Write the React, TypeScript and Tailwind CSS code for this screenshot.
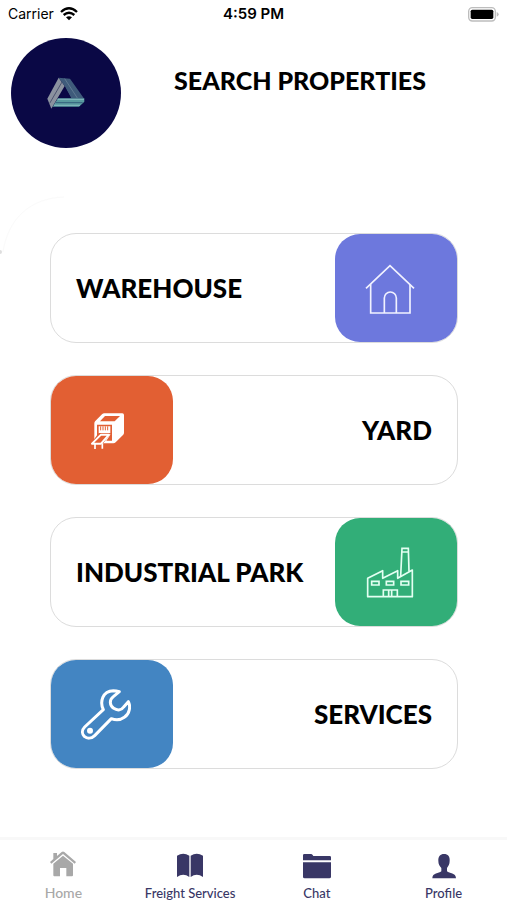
import type { ReactNode } from "react"
import { clsx } from "clsx"

interface Category {
  title: string
  color: string
  iconSide: "left" | "right"
  icon: ReactNode
}

interface Tab {
  label: string
  active?: boolean
  icon: ReactNode
}

const WarehouseIcon = () => (
  <svg viewBox="0 0 150 156" className="w-[50px] h-[52px]" fill="none" stroke="#f1f2ff" strokeWidth="5">
    <path d="M3 79 L75 11 L147 79" />
    <path d="M17 67 V153 H135 V67" />
    <path d="M58 153 V108 A18 18 0 0 1 94 108 V153" />
  </svg>
)

const YardIcon = () => (
  <svg viewBox="0 0 150 156" className="w-[50px] h-[52px]">
    <path
      d="M40 58 Q40 54 43 51 L63 31 Q66 28 70 28 H124 Q129 28 129 33 V86 Q129 90 126 93 L104 115 Q101 118 97 118 H66 L85 93 H62 L40 111 Z"
      fill="#fff"
    />
    <path d="M57 52 L72 36 H117 L101 52 Z" fill="#e25f33" />
    <path d="M48 62 H93 V110 H76 L88 92 V67 H53 V97 L48 101 Z" fill="#e25f33" />
    <path d="M59 67 V79 M66 67 V79 M73 67 V79 M80 67 V79" stroke="#e25f33" strokeWidth="3" />
    <path d="M53 87 H91 L61 124 H26 Z" fill="#e25f33" />
    <path d="M60 92 H84 L60 119 H33 Z" fill="#e25f33" stroke="#fff" strokeWidth="6" strokeLinejoin="round" />
    <path d="M42 120 V135 M64 118 V134" stroke="#fff" strokeWidth="5" />
  </svg>
)

const IndustrialIcon = () => (
  <svg viewBox="0 0 150 156" className="w-[50px] h-[52px]" fill="none" stroke="#e4fff2" strokeWidth="5">
    <path d="M8 97 L53 74 V97 L98 74 V97 L142 72 V152 H8 Z" strokeLinejoin="round" />
    <path d="M107 91 L111 7 H130 L132 76 M111 18 H130" />
    <path d="M20 106 H42 V117 H20 Z M64 106 H86 V117 H64 Z M108 106 H131 V117 H108 Z" />
    <path d="M55 152 V132 H97 V152 M71 134 V150 M80 134 V150" />
  </svg>
)

const ServicesIcon = () => (
  <svg viewBox="0 0 150 156" className="w-[50px] h-[52px]" fill="none" stroke="#fff" strokeWidth="9" strokeLinejoin="round">
    <path d="M67 65 C56 42 64 9 97 8 C103 8 109 9 115 11 L97 26 C84 36 86 53 98 61 C110 69 122 66 128 57 L142 41 C149 54 147 77 130 88 C119 96 104 97 91 92 L41 143 C31 153 18 152 10 145 C2 137 3 125 11 117 Z" />
    <circle cx="27" cy="128" r="9" fill="#fff" stroke="none" />
  </svg>
)

const HomeIcon = () => (
  <svg viewBox="0 0 84 84" className="size-7" fill="currentColor">
    <path d="M13 6 H24 V15 L38 3 Q42 0 46 3 L81 33 L77 38 L42 9 L7 38 L3 33 L13 24 Z" />
    <path d="M13 38 L42 14 L72 38 V73 Q72 76 69 76 H52 V51 H33 V76 H16 Q13 76 13 73 Z" />
  </svg>
)

const BookIcon = () => (
  <svg viewBox="0 0 84 84" className="size-7" fill="currentColor">
    <path d="M3 14 Q22 2 40 14 V78 Q22 64 3 78 Z" />
    <path d="M44 14 Q62 2 81 14 V78 Q62 64 44 78 Z" />
  </svg>
)

const FolderIcon = () => (
  <svg viewBox="0 0 84 84" className="size-7" fill="currentColor">
    <path d="M0 28 V13 Q0 9 4 9 H24 Q27 9 29 12 L31 15 H80 Q84 15 84 19 V28 Z" />
    <path d="M0 34 H84 V77 Q84 82 79 82 H5 Q0 82 0 77 Z" />
  </svg>
)

const PersonIcon = () => (
  <svg viewBox="0 0 84 84" className="size-7" fill="currentColor">
    <path d="M42 9 C54 9 60 17 59 29 C59 40 55 45 51 51 V61 C58 68 78 65 78 82 H7 C7 65 27 68 34 61 V51 C29 45 25 40 25 29 C24 17 31 9 42 9 Z" />
  </svg>
)

const categories: Category[] = [
  { title: "WAREHOUSE", color: "bg-[#6d78dd]", iconSide: "right", icon: <WarehouseIcon /> },
  { title: "YARD", color: "bg-[#e25f33]", iconSide: "left", icon: <YardIcon /> },
  { title: "INDUSTRIAL PARK", color: "bg-[#32ae78]", iconSide: "right", icon: <IndustrialIcon /> },
  { title: "SERVICES", color: "bg-[#4385c2]", iconSide: "left", icon: <ServicesIcon /> },
]

const tabs: Tab[] = [
  { label: "Home", active: true, icon: <HomeIcon /> },
  { label: "Freight Services", icon: <BookIcon /> },
  { label: "Chat", icon: <FolderIcon /> },
  { label: "Profile", icon: <PersonIcon /> },
]

function StatusBar() {
  return (
    <div className="grid grid-cols-3 items-center h-7 px-2 font-['Inter',sans-serif] text-black">
      <div className="flex items-center gap-1.5 text-sm">
        <span>Carrier</span>
        <svg viewBox="0 0 54 42" className="w-[18px] h-3.5" fill="none" stroke="#000" strokeWidth="7">
          <path d="M3 15 Q27 -7 51 15" />
          <path d="M11 24 Q27 10 43 24" />
          <path d="M18 31 Q27 24 36 31 L27 40 Z" fill="#000" stroke="none" />
        </svg>
      </div>
      <span className="text-center text-[15px] font-semibold">4:59 PM</span>
      <svg viewBox="0 0 93 45" className="w-[31px] h-[15px] justify-self-end">
        <rect x="2" y="2" width="80" height="40" rx="11" fill="#fff" stroke="#bdbdbd" strokeWidth="4" />
        <rect x="8" y="8" width="68" height="28" rx="5" fill="#000" />
        <path d="M86 15 Q92 17 92 22 Q92 27 86 29 Z" fill="#bdbdbd" />
      </svg>
    </div>
  )
}

function Header() {
  return (
    <header className="flex items-start pt-2.5 pl-[11px]">
      <div className="flex items-center justify-center size-[110px] shrink-0 rounded-full bg-[#0a0845]">
        <svg viewBox="0 0 120 102" className="w-10 h-[34px]">
          <path d="M38 5 L56 30 L16 98 L4 68 Z" fill="#8b929f" />
          <path d="M48 18 L11 82" stroke="#4d5470" strokeWidth="3" />
          <path d="M38 5 L72 8 L113 66 H75 L56 30 Z" fill="#3f5b7b" />
          <path d="M56 8 L94 66" stroke="#5f7a92" strokeWidth="3" />
          <path d="M36 67 H115 V77 L99 92 H20 Z" fill="#599a9f" />
          <path d="M35 70 H114 M24 88 H102" stroke="#7fb5b9" strokeWidth="4" />
          <path d="M30 80 H110" stroke="#35627d" strokeWidth="3" />
          <path d="M57 34 L75 65 H38 Z" fill="#0a0845" />
        </svg>
      </div>
      <h1 className="flex-1 pt-6 pr-7 text-center text-[25px] leading-9 font-black">SEARCH PROPERTIES</h1>
    </header>
  )
}

function CategoryCard({ title, color, iconSide, icon }: Category) {
  return (
    <button
      type="button"
      className={clsx(
        "flex items-stretch w-full h-[110px] rounded-[26px] border border-[#dcdcdc] bg-white cursor-pointer",
        iconSide === "left" && "flex-row-reverse"
      )}
    >
      <span
        className={clsx(
          "flex flex-1 items-center px-[25px] text-[26px] leading-9 font-black whitespace-nowrap",
          iconSide === "left" && "justify-end"
        )}
      >
        {title}
      </span>
      <span className={clsx("flex items-center justify-center w-[122px] shrink-0 pr-3 rounded-[25px]", color)}>{icon}</span>
    </button>
  )
}

function TabBar() {
  return (
    <nav className="grid grid-cols-4 h-[63px] border-t-3 border-[#f8f8f8] bg-white">
      {tabs.map((tab) => (
        <a
          key={tab.label}
          href="#"
          className={clsx(
            "flex flex-col items-center pt-[11px] font-medium whitespace-nowrap",
            tab.active ? "text-sm text-[#a8a8a8]" : "text-[13px] text-[#393766]"
          )}
        >
          {tab.icon}
          <span className="pt-1 leading-5">{tab.label}</span>
        </a>
      ))}
    </nav>
  )
}

export default function App() {
  return (
    <div className="flex flex-col min-h-screen bg-white font-['Lato',sans-serif] text-black">
      <StatusBar />
      <Header />
      <main className="relative flex-1 mt-12 pl-[50px] pr-[49px] pt-[37px]">
        <svg viewBox="0 0 66 60" className="absolute left-0 top-0 w-[66px] h-[60px]" fill="none" aria-hidden="true">
          <path d="M3 56 C8 22 31 2 64 1" stroke="#fafafa" strokeWidth="1" />
          <circle cx="0" cy="56" r="2" fill="#dedede" />
        </svg>
        <div className="flex flex-col gap-8">
          {categories.map((category) => (
            <CategoryCard key={category.title} {...category} />
          ))}
        </div>
      </main>
      <TabBar />
    </div>
  )
}
